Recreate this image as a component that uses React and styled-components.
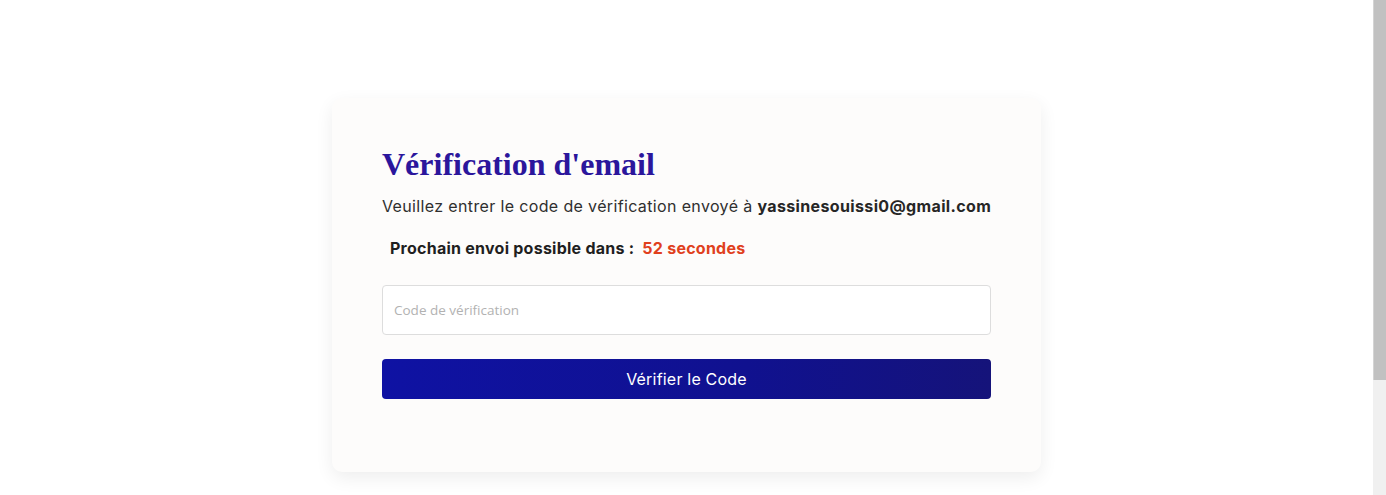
import React, { useState } from "react";
import styled, { createGlobalStyle } from "styled-components";

const GlobalStyle = createGlobalStyle`
  body {
    margin: 0;
    background: #ffffff;
    font-family: "Inter", "Noto Sans", sans-serif;
    overflow: hidden;
  }
`;

export default function App() {
  const [code, setCode] = useState("");

  return (
    <>
      <GlobalStyle />
      <Viewport>
        <Page>
          <Card>
            <Title>Vérification d'email</Title>
            <Subtitle>
              Veuillez entrer le code de vérification envoyé à{" "}
              <strong>yassinesouissi0@gmail.com</strong>
            </Subtitle>
            <Countdown>
              Prochain envoi possible dans :<Seconds>52 secondes</Seconds>
            </Countdown>
            <Form onSubmit={(e) => e.preventDefault()}>
              <CodeInput
                value={code}
                onChange={(e) => setCode(e.target.value)}
                placeholder="Code de vérification"
              />
              <SubmitButton type="submit">Vérifier le Code</SubmitButton>
            </Form>
          </Card>
        </Page>
        <ScrollRail>
          <ScrollThumb />
        </ScrollRail>
      </Viewport>
    </>
  );
}

const Viewport = styled.div`
  display: grid;
  grid-template-columns: 1fr 13px;
  height: 100vh;
`;

const Page = styled.main`
  display: flex;
  justify-content: center;
  align-items: flex-start;
  padding-top: 98px;
  overflow: hidden;
`;

const ScrollRail = styled.div`
  display: flex;
  flex-direction: column;
  background: #f0f0f0;
`;

const ScrollThumb = styled.div`
  height: 380px;
  background: #c1c1c1;
  border-left: 1px solid #d4d4d4;
`;

const Card = styled.section`
  width: 709px;
  box-sizing: border-box;
  padding: 46px 50px 73px;
  background-color: #fdfcfb;
  border-radius: 10px;
  box-shadow: 0 6px 18px 0 rgb(0 0 0 / 7%);
`;

const Title = styled.h1`
  margin: 0;
  font-family: "Liberation Serif", "Times New Roman", serif;
  font-weight: 700;
  font-size: 32px;
  line-height: 40px;
  color: #2b169c;
`;

const Subtitle = styled.p`
  margin: 10px 0 0;
  font-size: 16px;
  line-height: 24px;
  color: #2f2f2f;
  letter-spacing: 0.36px;
  white-space: nowrap;
  strong {
    font-weight: 700;
    color: #262626;
  }
`;

const Countdown = styled.p`
  margin: 18px 0 0 8px;
  font-size: 16px;
  line-height: 24px;
  font-weight: 700;
  letter-spacing: 0.25px;
  color: #1f1f1f;
`;

const Seconds = styled.span`
  margin-left: 8px;
  color: #e0401d;
`;

const Form = styled.form`
  display: flex;
  flex-direction: column;
  gap: 24px;
  margin-top: 25px;
`;

const CodeInput = styled.input`
  height: 50px;
  box-sizing: border-box;
  padding: 0 11px;
  border: 1px solid #dddddd;
  border-radius: 4px;
  background: #ffffff;
  font-family: "Open Sans", "Noto Sans", sans-serif;
  font-size: 13.5px;
  color: #333;
  outline: none;
  &::placeholder {
    color: #b2b2b2;
  }
`;

const SubmitButton = styled.button`
  height: 40px;
  border: none;
  border-radius: 4px;
  background: linear-gradient(90deg, #0f12a3 0%, #10118f 60%, #15137a 100%);
  color: #ffffff;
  font-family: "Inter", "Noto Sans", sans-serif;
  font-size: 16px;
  letter-spacing: 0.2px;
  cursor: pointer;
`;
